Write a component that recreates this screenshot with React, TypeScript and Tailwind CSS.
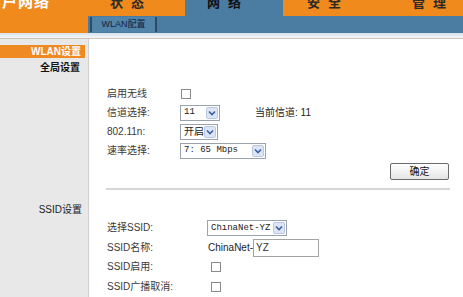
import React from "react";

const cjk = { fontFamily: '"Liberation Sans", "Noto Sans CJK SC", sans-serif' };
const mono = { fontFamily: '"Liberation Mono", "Noto Sans CJK SC", monospace' };

function Chevron() {
  return (
    <svg width="8" height="6" viewBox="0 0 8 6">
      <path d="M1 1.5 L4 4.5 L7 1.5" fill="none" stroke="#3c5f9c" strokeWidth="1.6" />
    </svg>
  );
}

function Select({ w, text, m }: { w: number; text: string; m?: boolean }) {
  return (
    <div
      className="flex h-[16px] shrink-0 items-center border border-[#9aa3ad] bg-white"
      style={{ width: w }}
    >
      <span
        className={
          "min-w-0 flex-1 overflow-hidden whitespace-nowrap pl-[3px] leading-none text-[#222] " +
          (m ? "text-[9px]" : "text-[10px]")
        }
        style={m ? mono : cjk}
      >
        {text}
      </span>
      <span className="mr-[1px] flex h-[12px] w-[12px] shrink-0 items-center justify-center rounded-[2px] border border-[#b9c9e4] bg-[#dbe5f6]">
        <Chevron />
      </span>
    </div>
  );
}

function Check() {
  return <div className="h-[10px] w-[10px] border border-[#8a8a8a] bg-white" />;
}

function Row({
  label,
  h,
  ctrl,
  children,
}: {
  label: string;
  h: number;
  ctrl: number;
  children: React.ReactNode;
}) {
  return (
    <div className="flex items-center" style={{ height: h }}>
      <div
        className="shrink-0 whitespace-nowrap text-[10px] leading-none text-[#3a3a3a]"
        style={{ width: ctrl }}
      >
        {label}
      </div>
      {children}
    </div>
  );
}

export default function App() {
  return (
    <div className="h-[297px] w-[463px] overflow-hidden bg-white" style={cjk}>
      {/* header */}
      <div className="flex h-[33px]">
        <div className="w-[88px] overflow-hidden bg-[#f18a1d]">
          <div className="ml-[-14px] mt-[-6px] whitespace-nowrap text-[15px] font-bold leading-none tracking-[1px] text-white">
            门户网络
          </div>
        </div>
        <div className="flex flex-1 flex-col">
          <div className="flex h-[16px]">
            <div className="w-[97px] overflow-hidden bg-[#f18a1d]">
              <div className="ml-[22px] mt-[-4px] whitespace-nowrap text-[13px] font-bold leading-none tracking-[8px] text-[#2a2a2a]">
                状态
              </div>
            </div>
            <div className="w-[98px] overflow-hidden bg-[#4b7ca2]">
              <div className="ml-[22px] mt-[-4px] whitespace-nowrap text-[13px] font-bold leading-none tracking-[8px] text-[#111]">
                网络
              </div>
            </div>
            <div className="flex flex-1 overflow-hidden bg-[#f18a1d]">
              <div className="ml-[24px] mt-[-4px] whitespace-nowrap text-[13px] font-bold leading-none tracking-[8px] text-[#2a2a2a]">
                安全
              </div>
              <div className="ml-[63px] mt-[-4px] whitespace-nowrap text-[13px] font-bold leading-none tracking-[8px] text-[#2a2a2a]">
                管理
              </div>
            </div>
          </div>
          <div className="flex h-[17px] bg-[#4b7ca2] pt-[1px]">
            <div className="ml-[2px] flex h-[15px] w-[67px] items-center justify-center border-x-2 border-[#2e4a66] bg-[#5283a9]">
              <span className="text-[9px] leading-none text-[#13233d]">WLAN配置</span>
            </div>
          </div>
        </div>
      </div>
      <div className="h-[5px] bg-gradient-to-b from-[#d6e2ec] to-[#f4f7f9]" />
      <div className="h-[1px] bg-[#cbc4bd]" />

      {/* body */}
      <div className="flex h-[258px]">
        <div className="w-[88px] shrink-0 bg-[#e8e8e8] pt-[6px]">
          <div className="flex h-[13px] w-[85px] items-center justify-end bg-[#ef8a22] pr-[4px]">
            <span className="text-[10px] font-bold leading-none text-white">WLAN设置</span>
          </div>
          <div className="mt-[5px] pr-[8px] text-right text-[10px] font-bold leading-none text-[#111]">
            全局设置
          </div>
          <div className="mt-[132px] pr-[6px] text-right text-[10px] leading-none text-[#222]">
            SSID设置
          </div>
        </div>
        <div className="flex-1 border-l border-[#cfcfcf] pl-[18px] pr-[14px] pt-[45px]">
          <Row label="启用无线" h={19} ctrl={74}>
            <Check />
          </Row>
          <Row label="信道选择:" h={19} ctrl={73}>
            <Select w={40} text="11" m />
            <span className="ml-[35px] whitespace-nowrap text-[10px] leading-none text-[#222]">
              当前信道: 11
            </span>
          </Row>
          <Row label="802.11n:" h={19} ctrl={73}>
            <Select w={38} text="开启" />
          </Row>
          <Row label="速率选择:" h={19} ctrl={73}>
            <Select w={86} text="7: 65 Mbps" m />
          </Row>
          <div className="mt-[3px] flex justify-end">
            <div className="flex h-[17px] w-[59px] items-center justify-center rounded-[2px] border border-[#6b6b6b] bg-gradient-to-b from-white to-[#e4e4e4]">
              <span className="text-[10px] leading-none text-[#111]">确定</span>
            </div>
          </div>
          <div className="ml-[-1px] mr-[-1px] mt-[8px] h-[2px] bg-[#d6d6d6]" />
          <div className="mt-[28px]">
            <Row label="选择SSID:" h={20} ctrl={100}>
              <Select w={80} text="ChinaNet-YZ" m />
            </Row>
            <Row label="SSID名称:" h={19} ctrl={101}>
              <span className="whitespace-nowrap text-[10px] leading-none text-[#222]">ChinaNet-</span>
              <div className="flex h-[18px] w-[66px] items-center border border-[#a3a3a3] pl-[2px]">
                <span className="text-[10px] leading-none text-[#333]">YZ</span>
              </div>
            </Row>
            <Row label="SSID启用:" h={20} ctrl={104}>
              <Check />
            </Row>
            <Row label="SSID广播取消:" h={20} ctrl={104}>
              <Check />
            </Row>
          </div>
        </div>
      </div>
    </div>
  );
}
